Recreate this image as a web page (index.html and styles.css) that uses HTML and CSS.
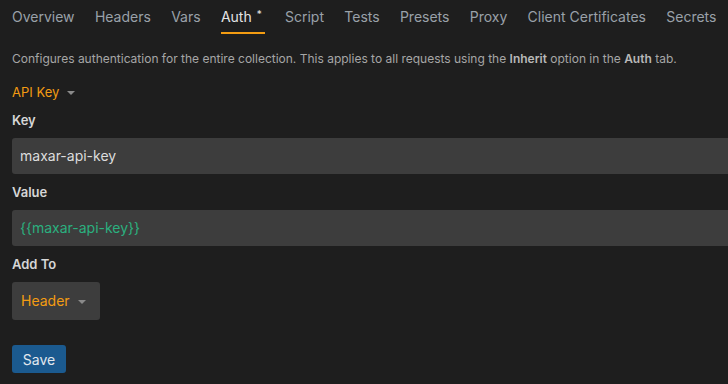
FILE: index.html
```
<html lang="en">
<head>
    <meta charset="UTF-8">
    <title>Collection Settings</title>
    <link rel="stylesheet" href="styles.css">
</head>
<body>
    <div class="tabs">
        <div class="tab">Overview</div>
        <div class="tab">Headers</div>
        <div class="tab">Vars</div>
        <div class="tab active">Auth <sup class="dot">*</sup></div>
        <div class="tab">Script</div>
        <div class="tab">Tests</div>
        <div class="tab">Presets</div>
        <div class="tab">Proxy</div>
        <div class="tab">Client Certificates</div>
        <div class="tab">Secrets</div>
    </div>

    <div class="pane">
        <p class="desc">Configures authentication for the entire collection. This applies to all requests using the <b>Inherit</b> option in the <b>Auth</b> tab.</p>

        <div class="mode">API Key <span class="caret"></span></div>

        <label class="label">Key</label>
        <div class="input">maxar-api-key</div>

        <label class="label">Value</label>
        <div class="input var">{{maxar-api-key}}</div>

        <label class="label">Add To</label>
        <div class="select">Header <span class="caret"></span></div>

        <button class="save">Save</button>
    </div>
</body>
</html>
```

FILE: styles.css
```
* {
    box-sizing: border-box;
    margin: 0;
    padding: 0;
}
body {
    background-color: #1e1e1e;
    font-family: Inter, "Liberation Sans", sans-serif;
    overflow: hidden;
}
.tabs {
    display: flex;
    gap: 20.3px;
    padding: 0 12px;
    height: 35px;
    white-space: nowrap;
    overflow: hidden;
}
.tab {
    font-size: 14px;
    color: #9aa1a9;
    padding-top: 8px;
    height: 35px;
    border-bottom: 2px solid transparent;
}
.tab.active {
    color: #e4e4e4;
    border-bottom-color: #f39c12;
    padding-right: 3px;
    height: 34px;
}
.dot {
    font-size: 10px;
    vertical-align: 4px;
    margin-left: 1px;
}
.pane {
    padding: 16px 0 0 12px;
    overflow: hidden;
}
.desc {
    font-size: 12px;
    color: #a6a6a6;
    line-height: 16px;
}
.desc b {
    font-weight: 600;
    color: #b8b8b8;
}
.mode {
    color: #f39c12;
    font-size: 13px;
    margin-top: 17px;
    line-height: 16px;
}
.caret {
    display: inline-block;
    width: 0;
    height: 0;
    border-left: 4px solid transparent;
    border-right: 4px solid transparent;
    border-top: 4px solid #8a8a8a;
    vertical-align: middle;
    margin-left: 4px;
}
.label {
    display: block;
    font-size: 13px;
    font-weight: 600;
    color: #d6d6d6;
    line-height: 16px;
    margin-top: 10px;
    margin-bottom: 10px;
}
.mode + .label {
    margin-top: 12px;
}
.input {
    width: 760px;
    height: 36px;
    background-color: #3d3d3d;
    border-radius: 3px;
    font-size: 14px;
    color: #dcdcdc;
    padding: 9px 8px;
    line-height: 18px;
}
.input.var {
    color: #2bb07f;
}
.select {
    width: 88px;
    height: 38px;
    background-color: #3d3d3d;
    border-radius: 3px;
    color: #f39c12;
    font-size: 14px;
    padding: 10px 9px;
    line-height: 18px;
    margin-top: 1px;
}
.save {
    display: block;
    margin-top: 25px;
    width: 54px;
    height: 28px;
    background-color: #1b5a8f;
    color: #e2e8ee;
    border: none;
    border-radius: 3px;
    font-family: Inter, "Liberation Sans", sans-serif;
    font-size: 14px;
}
```
